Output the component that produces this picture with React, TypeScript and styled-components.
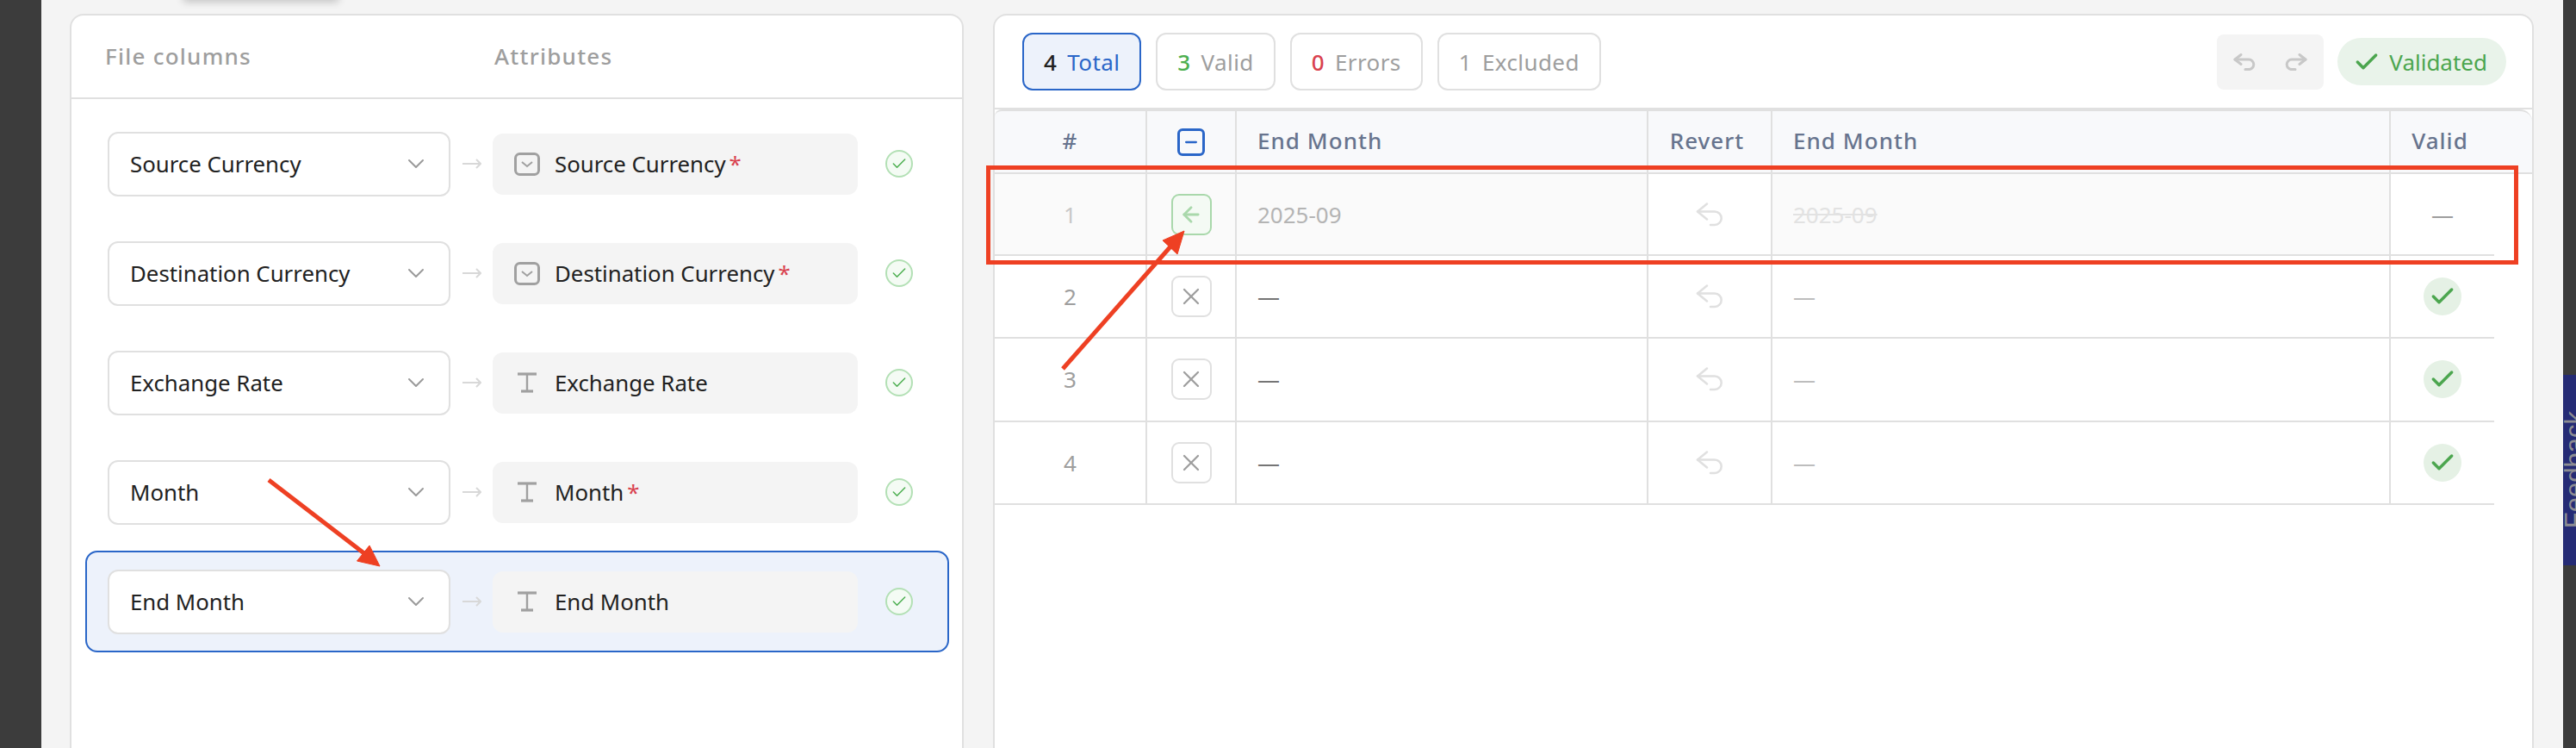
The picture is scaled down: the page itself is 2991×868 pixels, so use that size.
import React from "react";
import styled, { createGlobalStyle } from "styled-components";
import { ArrowLeft, Check, ChevronDown, Minus, X } from "lucide-react";

const Global = createGlobalStyle`
  html, body { margin: 0; padding: 0; background: #f4f4f4; }
  body { font-family: "Noto Sans", "Open Sans", sans-serif; color: #212121; }
  * { box-sizing: border-box; }
`;

const Page = styled.div`
  position: relative;
  display: flex;
  width: 2991px;
  height: 868px;
  overflow: hidden;
`;
const DarkEdge = styled.div<{ $w: number }>`
  position: relative;
  flex: 0 0 ${(p) => p.$w}px;
  background: #3c3c3c;
`;
const FeedbackTab = styled.div`
  position: absolute;
  top: 435px;
  left: 0;
  width: 15px;
  height: 221px;
  display: flex;
  align-items: center;
  background: #252b75;
  overflow: hidden;
`;
const FeedbackText = styled.span`
  margin-left: -2px;
  writing-mode: vertical-rl;
  transform: rotate(180deg);
  font-family: "Liberation Sans", sans-serif;
  font-size: 31px;
  line-height: 31px;
  color: #8d8d92;
  white-space: nowrap;
`;
const Main = styled.div`
  position: relative;
  flex: 1;
  display: flex;
  gap: 34px;
  padding: 16px 34px 0 33px;
`;
const TopShadow = styled.div`
  position: absolute;
  left: 165px;
  top: -12px;
  width: 180px;
  height: 12px;
  box-shadow: 0 2px 10px rgba(0, 0, 0, 0.22);
`;
const Panel = styled.section<{ $w: number }>`
  flex: 0 0 ${(p) => p.$w}px;
  height: 900px;
  background: #fff;
  border: 2px solid #e0e0e0;
  border-radius: 16px;
  overflow: hidden;
`;
const MapHead = styled.header`
  display: flex;
  align-items: center;
  height: 97px;
  padding: 0 0 2px 39px;
  border-bottom: 2px solid #e0e0e0;
  font-size: 26px;
  font-weight: 500;
  letter-spacing: 1.25px;
  color: #9e9e9e;
`;
const MapHeadCell = styled.div<{ $w?: number }>`
  width: ${(p) => (p.$w ? `${p.$w}px` : "auto")};
`;
const MapList = styled.div`
  display: flex;
  flex-direction: column;
  gap: 9px;
  padding: 16px 15px 0 16px;
`;
const MapRow = styled.div<{ $active?: boolean }>`
  display: flex;
  align-items: center;
  height: 118px;
  padding: 0 24px;
  border: 2px solid ${(p) => (p.$active ? "#2a66c8" : "transparent")};
  border-radius: 14px;
  background: ${(p) => (p.$active ? "#edf2fb" : "transparent")};
`;
const Select = styled.div`
  flex: 0 0 398px;
  height: 75px;
  display: flex;
  align-items: center;
  justify-content: space-between;
  padding: 0 22px 0 24px;
  background: #fff;
  border: 2px solid #e0e0e0;
  border-radius: 12px;
  font-size: 25.8px;
  color: #212121;
`;
const MapArrow = styled.div`
  flex: 0 0 49px;
  display: flex;
  justify-content: center;
`;
const Attr = styled.div`
  flex: 0 0 424px;
  height: 71px;
  display: flex;
  align-items: center;
  gap: 16px;
  padding-left: 24px;
  background: #f4f4f4;
  border-radius: 12px;
  font-size: 25.8px;
  color: #212121;
`;
const AttrIcon = styled.span`
  flex: 0 0 32px;
  display: flex;
  justify-content: center;
`;
const Req = styled.span`
  color: #d9424f;
  margin-left: 4px;
`;
const RowStatus = styled.div`
  margin-left: 32px;
  width: 32px;
  height: 32px;
  display: flex;
  align-items: center;
  justify-content: center;
  border-radius: 50%;
  border: 2.5px solid #b3e0b5;
  background: #f4fbf4;
  color: #4caf50;
`;
const Toolbar = styled.div`
  display: flex;
  align-items: center;
  height: 109px;
  padding: 0 30px 0 32px;
  border-bottom: 2px solid #e0e0e0;
  gap: 17px;
`;
const Chip = styled.div<{ $active?: boolean }>`
  display: flex;
  align-items: center;
  gap: 12px;
  height: 67px;
  padding: 0 23px;
  border: 2px solid ${(p) => (p.$active ? "#2a66c8" : "#e0e0e0")};
  border-radius: 12px;
  background: ${(p) => (p.$active ? "#edf2fb" : "#fff")};
  font-size: 26px;
  letter-spacing: 0.4px;
  color: ${(p) => (p.$active ? "#2a66c8" : "#9e9e9e")};
`;
const ChipNum = styled.span<{ $c: string; $bold?: boolean }>`
  color: ${(p) => p.$c};
  font-weight: ${(p) => (p.$bold ? 500 : 400)};
`;
const Spacer = styled.div`
  flex: 1;
`;
const HistoryGroup = styled.div`
  width: 124px;
  height: 64px;
  margin-right: -1px;
  display: flex;
  align-items: center;
  justify-content: center;
  gap: 34px;
  background: #f4f4f4;
  border-radius: 8px;
`;
const ValidatedPill = styled.div`
  display: flex;
  align-items: center;
  gap: 10px;
  height: 55px;
  padding: 0 22px 0 18px;
  border-radius: 28px;
  background: #e9f3ea;
  color: #4ca64f;
  font-size: 26px;
`;
const COLS = "177px 104px 478px 144px 718px 120px";
const HeadRow = styled.div`
  display: grid;
  grid-template-columns: ${COLS} 1fr;
  height: 75px;
  border-top: 2px solid #e0e0e0;
  border-bottom: 2px solid #e0e0e0;
  background: #f8f9fb;
  border-top-left-radius: 8px;
  border-top-right-radius: 14px;
  font-size: 26px;
  font-weight: 500;
  letter-spacing: 1.04px;
  color: #67748e;
`;
const HeadLabel = styled.span<{ $nudge?: boolean }>`
  margin-bottom: 3px;
  margin-right: ${(p) => (p.$nudge ? 6 : 0)}px;
`;
const BodyRow = styled.div<{ $first?: boolean }>`
  display: grid;
  grid-template-columns: ${COLS};
  width: 1741px;
  height: ${(p) => (p.$first ? 95 : 96.3)}px;
  border-bottom: 2px solid #e0e0e0;
`;
const Cell = styled.div<{ $center?: boolean; $dim?: boolean; $last?: boolean }>`
  display: flex;
  align-items: center;
  justify-content: ${(p) => (p.$center ? "center" : "flex-start")};
  padding: ${(p) => (p.$center ? "0" : "0 24px")};
  border-right: ${(p) => (p.$last ? "0" : "2px solid #e0e0e0")};
  background: ${(p) => (p.$dim ? "#fafafa" : "transparent")};
  font-size: 26px;
`;
const IndexText = styled.span<{ $dim?: boolean }>`
  color: ${(p) => (p.$dim ? "#c8c8c8" : "#9e9e9e")};
`;
const MuteText = styled.span<{ $c: string; $strike?: boolean }>`
  color: ${(p) => p.$c};
  text-decoration: ${(p) => (p.$strike ? "line-through" : "none")};
`;
const HeadCheck = styled.div`
  width: 32px;
  height: 32px;
  display: flex;
  align-items: center;
  justify-content: center;
  border: 3px solid #2a66c8;
  border-radius: 6px;
  color: #2a66c8;
`;
const RowBtn = styled.div<{ $on?: boolean }>`
  width: 47px;
  height: 48px;
  display: flex;
  align-items: center;
  justify-content: center;
  border: 2px solid ${(p) => (p.$on ? "#a9d8ab" : "#e0e0e0")};
  border-radius: 9px;
  background: ${(p) => (p.$on ? "#f4faf4" : "#fff")};
  color: ${(p) => (p.$on ? "#a9d8ab" : "#9e9e9e")};
`;
const ValidDot = styled.div`
  width: 44px;
  height: 44px;
  display: flex;
  align-items: center;
  justify-content: center;
  border-radius: 50%;
  background: #e5f1e5;
  color: #4ca64f;
`;
const Annotations = styled.svg`
  position: absolute;
  inset: 0;
  pointer-events: none;
`;

const MapArrowIcon = () => (
  <svg width="22" height="12" viewBox="0 0 22 12" fill="none" stroke="#d8d8d8" strokeWidth="2">
    <path d="M0 6h21" />
    <path d="M16 1l5 5-5 5" />
  </svg>
);
const ListTypeIcon = () => (
  <svg width="30" height="27" viewBox="0 0 30 27" fill="none" stroke="#a0a0a0">
    <rect x="1.5" y="1.5" width="27" height="24" rx="5" strokeWidth="3" />
    <path d="M9 11l6 5 6-5" strokeWidth="2" />
  </svg>
);
const TextTypeIcon = () => (
  <svg width="24" height="24" viewBox="0 0 24 24" fill="none" stroke="#a0a0a0">
    <path d="M1 2h22" strokeWidth="3.2" />
    <path d="M12 2v20" strokeWidth="2.4" />
    <path d="M5 22h14" strokeWidth="3.2" />
  </svg>
);
const SmallUndo = ({ flip }: { flip?: boolean }) => (
  <svg
    width="26"
    height="20"
    viewBox="0 0 26 20"
    fill="none"
    stroke="#c8c8c8"
    strokeWidth="3"
    strokeLinecap="round"
    strokeLinejoin="round"
    transform={flip ? "scale(-1 1)" : undefined}
  >
    <path d="M9 1.5L2 7l7 5.5" />
    <path d="M2 7h16a5.8 5.8 0 0 1 0 11.6h-4" />
  </svg>
);
const RevertGlyph = () => (
  <svg width="32" height="28" viewBox="0 0 32 28" fill="none" stroke="#e0e0e0" strokeWidth="2.5" strokeLinecap="round" strokeLinejoin="round">
    <path d="M13 1.5L2 10.5l11 9" />
    <path d="M2 10.5h20a7.7 7.7 0 0 1 0 15.4h-5" />
  </svg>
);

const mappings = [
  { col: "Source Currency", kind: "list", req: true },
  { col: "Destination Currency", kind: "list", req: true },
  { col: "Exchange Rate", kind: "text", req: false },
  { col: "Month", kind: "text", req: true },
  { col: "End Month", kind: "text", req: false, active: true },
];

export default function App() {
  return (
    <Page>
      <Global />
      <DarkEdge $w={48} />
      <Main>
        <TopShadow />
        <Panel $w={1038}>
          <MapHead>
            <MapHeadCell $w={452}>File columns</MapHeadCell>
            <MapHeadCell>Attributes</MapHeadCell>
          </MapHead>
          <MapList>
            {mappings.map((m) => (
              <MapRow key={m.col} $active={m.active}>
                <Select>
                  {m.col}
                  <ChevronDown size={32} color="#9a9a9a" strokeWidth={1.5} />
                </Select>
                <MapArrow>
                  <MapArrowIcon />
                </MapArrow>
                <Attr>
                  <AttrIcon>{m.kind === "list" ? <ListTypeIcon /> : <TextTypeIcon />}</AttrIcon>
                  <span>
                    {m.col}
                    {m.req && <Req>*</Req>}
                  </span>
                </Attr>
                <RowStatus>
                  <Check size={20} strokeWidth={1.8} />
                </RowStatus>
              </MapRow>
            ))}
          </MapList>
        </Panel>
        <Panel $w={1789}>
          <Toolbar>
            <Chip $active>
              <ChipNum $c="#212121" $bold>4</ChipNum>Total
            </Chip>
            <Chip>
              <ChipNum $c="#4caf50" $bold>3</ChipNum>Valid
            </Chip>
            <Chip>
              <ChipNum $c="#d9424f" $bold>0</ChipNum>Errors
            </Chip>
            <Chip>
              <ChipNum $c="#9e9e9e">1</ChipNum>Excluded
            </Chip>
            <Spacer />
            <HistoryGroup>
              <SmallUndo />
              <SmallUndo flip />
            </HistoryGroup>
            <ValidatedPill>
              <Check size={32} strokeWidth={2.6} />
              Validated
            </ValidatedPill>
          </Toolbar>
          <HeadRow>
            <Cell $center><HeadLabel>#</HeadLabel></Cell>
            <Cell $center>
              <HeadCheck>
                <Minus size={20} strokeWidth={2.8} />
              </HeadCheck>
            </Cell>
            <Cell><HeadLabel>End Month</HeadLabel></Cell>
            <Cell $center><HeadLabel $nudge>Revert</HeadLabel></Cell>
            <Cell><HeadLabel>End Month</HeadLabel></Cell>
            <Cell $center $last><HeadLabel $nudge>Valid</HeadLabel></Cell>
          </HeadRow>
          {[1, 2, 3, 4].map((n) => {
            const ex = n === 1;
            return (
              <BodyRow key={n} $first={ex}>
                <Cell $center $dim={ex}>
                  <IndexText $dim={ex}>{n}</IndexText>
                </Cell>
                <Cell $center $dim={ex}>
                  <RowBtn $on={ex}>{ex ? <ArrowLeft size={28} strokeWidth={2.4} /> : <X size={32} strokeWidth={1.7} />}</RowBtn>
                </Cell>
                <Cell $dim={ex}>
                  {ex ? <MuteText $c="#b4b4b4">2025-09</MuteText> : <MuteText $c="#757575">—</MuteText>}
                </Cell>
                <Cell $center>
                  <RevertGlyph />
                </Cell>
                <Cell $dim={ex}>
                  {ex ? <MuteText $c="#e2e2e2" $strike>2025-09</MuteText> : <MuteText $c="#bdbdbd">—</MuteText>}
                </Cell>
                <Cell $center $last>
                  {ex ? (
                    <MuteText $c="#9e9e9e">—</MuteText>
                  ) : (
                    <ValidDot>
                      <Check size={32} strokeWidth={2.6} />
                    </ValidDot>
                  )}
                </Cell>
              </BodyRow>
            );
          })}
        </Panel>
      </Main>
      <DarkEdge $w={15}>
        <FeedbackTab>
          <FeedbackText>Feedback</FeedbackText>
        </FeedbackTab>
      </DarkEdge>
      <Annotations width="2991" height="868" viewBox="0 0 2991 868">
        <rect x="1147.5" y="194.5" width="1774" height="110" fill="none" stroke="#ee4023" strokeWidth="5" />
        <path d="M312 557L424 643" stroke="#ee4023" strokeWidth="5" fill="none" />
        <path d="M441 657L414.5 651L429 633Z" fill="#ee4023" stroke="#ee4023" strokeWidth="1" />
        <path d="M1234 428L1361 284" stroke="#ee4023" strokeWidth="5" fill="none" />
        <path d="M1375 268L1367 295L1350 279Z" fill="#ee4023" stroke="#ee4023" strokeWidth="1" />
      </Annotations>
    </Page>
  );
}
